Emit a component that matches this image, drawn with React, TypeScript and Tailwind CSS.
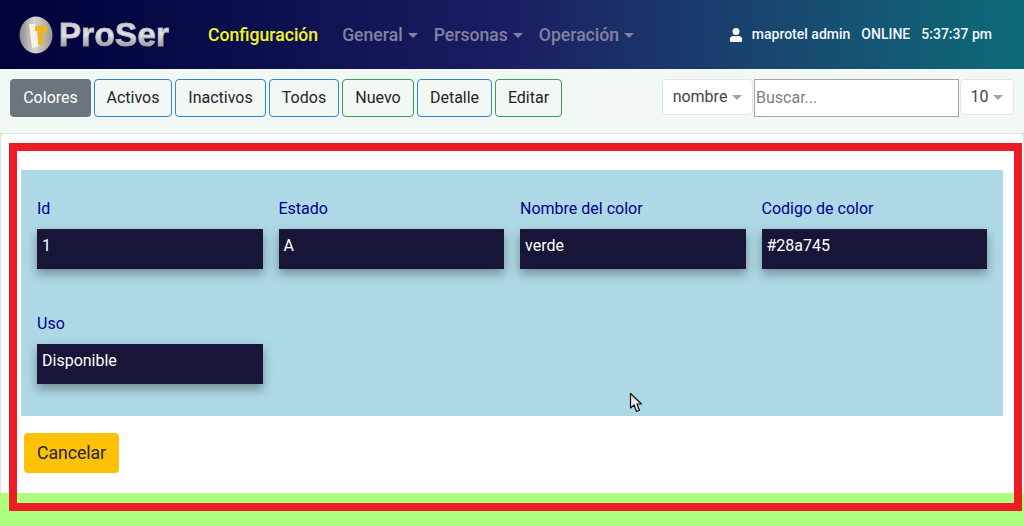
import React from "react";

function Logo() {
  return (
    <div className="flex items-center w-[208px] pl-[18px]">
      <svg width="36" height="38" viewBox="0 0 36 38" className="shrink-0">
        <defs>
          <linearGradient id="lg1" x1="0" y1="0" x2="1" y2="0">
            <stop offset="0" stopColor="#8a8a88" />
            <stop offset="0.45" stopColor="#d8d6d0" />
            <stop offset="1" stopColor="#9a9890" />
          </linearGradient>
        </defs>
        <ellipse cx="18" cy="19" rx="16.5" ry="18.5" fill="url(#lg1)" />
        <path d="M11 8 L17 8 L21 30 L14 32 Z" fill="#f4f2ea" />
        <path d="M17 10 H29 V17 H25 V29 H20 V15 H17 Z" fill="#eeb51e" />
      </svg>
      <span className="ml-[5px] text-[33px] leading-none font-bold tracking-[0.35px] text-transparent bg-clip-text bg-gradient-to-b from-[#c4c4c8] via-[#e2e2e4] to-[#7f8184] [-webkit-text-stroke:0.7px_#b4b5b8] font-['Liberation_Sans',sans-serif]">
        ProSer
      </span>
    </div>
  );
}

function Caret({ className }: { className: string }) {
  return (
    <span
      className={`inline-block ml-[5px] w-0 h-0 border-x-[5px] border-x-transparent border-t-[5px] align-[3px] ${className}`}
    />
  );
}

function NavItem({ label, className }: { label: string; className: string }) {
  return (
    <span className={`pt-[1px] text-[#82829f] text-[17.6px] font-medium whitespace-nowrap ${className}`}>
      {label}
      <Caret className="border-t-[#82829f]" />
    </span>
  );
}

function ToolButton({ label, tone, width }: { label: string; tone: "blue" | "green"; width: string }) {
  return (
    <button
      className={`h-[38px] rounded border text-base text-[#212529] ${width} ${
        tone === "blue" ? "border-[#2f86d6]" : "border-[#35a04e]"
      }`}
    >
      {label}
    </button>
  );
}

function Field({ label, value }: { label: string; value: string }) {
  return (
    <div>
      <div className="h-6 mb-2 text-base leading-6 text-[#00008b]">{label}</div>
      <div className="h-10 pl-[5px] pt-[5px] text-base leading-6 text-white bg-[#171538] shadow-[0_5px_10px_rgba(0,0,0,0.35)]">
        {value}
      </div>
    </div>
  );
}

export default function App() {
  return (
    <div className="relative w-[1024px] h-[526px] overflow-hidden bg-[#adff80] font-['Roboto',sans-serif]">
      <nav className="h-[69px] flex items-center bg-gradient-to-r from-[#02023a] via-[#1b1d63] to-[#0b6b78]">
        <Logo />
        <span className="pt-[1px] text-[#f5f523] text-[17.6px] font-medium whitespace-nowrap">Configuración</span>
        <NavItem label="General" className="ml-6" />
        <NavItem label="Personas" className="ml-4" />
        <NavItem label="Operación" className="ml-4" />
        <div className="ml-auto pr-8 flex items-center text-[14px] font-medium text-[#f2f6fa]">
          <svg width="14" height="14" viewBox="0 0 448 512" fill="#ffffff" className="mr-[9px]">
            <path d="M224 256a128 128 0 1 0 0-256 128 128 0 0 0 0 256zm90 32h-17a174 174 0 0 1-146 0h-17A134 134 0 0 0 0 422v42a48 48 0 0 0 48 48h352a48 48 0 0 0 48-48v-42a134 134 0 0 0-134-134z" />
          </svg>
          <span>maprotel admin</span>
          <span className="ml-[11px]">ONLINE</span>
          <span className="ml-[11px]">5:37:37 pm</span>
        </div>
      </nav>

      <div className="h-[64px] pt-[10px] px-[10px] flex items-start bg-[#f2f8f3]">
        <div className="flex gap-[3px]">
          <button className="h-[38px] w-[81px] rounded bg-[#6c757d] text-base text-white">Colores</button>
          <ToolButton label="Activos" tone="blue" width="w-[78px]" />
          <ToolButton label="Inactivos" tone="blue" width="w-[91px]" />
          <ToolButton label="Todos" tone="blue" width="w-[70px]" />
          <ToolButton label="Nuevo" tone="green" width="w-[72px]" />
          <ToolButton label="Detalle" tone="blue" width="w-[75px]" />
          <ToolButton label="Editar" tone="green" width="w-[67px]" />
        </div>
        <div className="ml-auto flex items-start">
          <div className="w-[91px] h-[36px] flex items-center justify-center rounded bg-white border border-[#e3e5e6] text-base text-[#3f4449]">
            nombre
            <Caret className="border-t-[#a0a4a8]" />
          </div>
          <div className="ml-[1px] w-[205px] h-[38px] px-[1px] flex items-center bg-white border border-[#a6a6a6] text-base text-[#7b7f83]">
            Buscar...
          </div>
          <div className="ml-[1px] w-[54px] h-[36px] flex items-center justify-center rounded bg-white border border-[#e3e5e6] text-base text-[#3f4449]">
            10
            <Caret className="border-t-[#a0a4a8]" />
          </div>
        </div>
      </div>

      <main className="h-[360px] bg-white border-t border-x border-[#e2e4e4] rounded-t pt-[36px]">
        <section className="ml-5 mr-5 h-[246px] px-4 pt-[27px] bg-[#add8e6]">
          <div className="grid grid-cols-4 gap-x-4 gap-y-[43px]">
            <Field label="Id" value="1" />
            <Field label="Estado" value="A" />
            <Field label="Nombre del color" value="verde" />
            <Field label="Codigo de color" value="#28a745" />
            <Field label="Uso" value="Disponible" />
          </div>
        </section>
        <button className="ml-[23px] mt-[17px] h-10 w-[95px] rounded bg-[#ffc107] text-[17.6px] text-[#212529]">
          Cancelar
        </button>
      </main>

      <div className="absolute left-[9px] top-[143px] w-[1013px] h-[368px] border-[8px] border-[#ed1c24] pointer-events-none" />

      <svg className="absolute left-[629px] top-[392px]" width="14" height="22" viewBox="0 0 14 22">
        <path
          d="M1.5 1.5 V16 L5 13 L7.5 19.5 L10.5 18.2 L8 12 H12.5 Z"
          fill="#e8e8e8"
          stroke="#111111"
          strokeWidth="1.2"
          strokeLinejoin="round"
        />
      </svg>
    </div>
  );
}
